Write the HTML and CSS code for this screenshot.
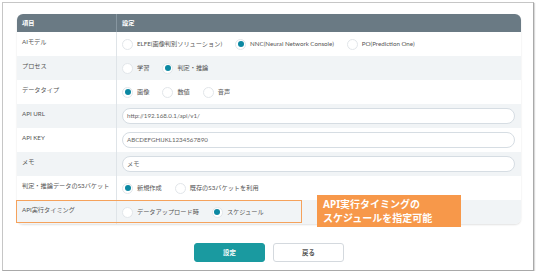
FILE: index.html
```html
<!DOCTYPE html>
<html lang="ja">
<head>
  <meta charset="UTF-8">
  <title>API設定</title>
  <link rel="stylesheet" href="styles.css">
</head>
<body>
  <div class="frame">
    <div class="sheet">
      <div class="table">
        <div class="row head">
          <div class="cell key">項目</div>
          <div class="cell val">設定</div>
        </div>

        <div class="row">
          <div class="cell key">AIモデル</div>
          <div class="cell val">
            <span class="opt"><i class="radio"></i>ELFE(画像判別ソリューション)</span>
            <span class="opt"><i class="radio on"></i>NNC(Neural Network Console)</span>
            <span class="opt"><i class="radio"></i>PO(Prediction One)</span>
          </div>
        </div>

        <div class="row alt">
          <div class="cell key">プロセス</div>
          <div class="cell val">
            <span class="opt"><i class="radio"></i>学習</span>
            <span class="opt"><i class="radio on"></i>判定・推論</span>
          </div>
        </div>

        <div class="row">
          <div class="cell key">データタイプ</div>
          <div class="cell val">
            <span class="opt"><i class="radio on"></i>画像</span>
            <span class="opt"><i class="radio"></i>数値</span>
            <span class="opt"><i class="radio"></i>音声</span>
          </div>
        </div>

        <div class="row alt">
          <div class="cell key">API URL</div>
          <div class="cell val"><div class="field">http://192.168.0.1/api/v1/</div></div>
        </div>

        <div class="row">
          <div class="cell key">API KEY</div>
          <div class="cell val"><div class="field">ABCDEFGHIJKL1234567890</div></div>
        </div>

        <div class="row alt">
          <div class="cell key">メモ</div>
          <div class="cell val"><div class="field">メモ</div></div>
        </div>

        <div class="row">
          <div class="cell key">判定・推論データのS3バケット</div>
          <div class="cell val">
            <span class="opt"><i class="radio on"></i>新規作成</span>
            <span class="opt"><i class="radio"></i>既存のS3バケットを利用</span>
          </div>
        </div>

        <div class="row alt last">
          <div class="cell key">API実行タイミング</div>
          <div class="cell val">
            <span class="opt"><i class="radio"></i>データアップロード時</span>
            <span class="opt"><i class="radio on"></i>スケジュール</span>
          </div>
        </div>

        <div class="mark"></div>
        <div class="callout">API実行タイミングの<br>スケジュールを指定可能</div>
      </div>

      <div class="actions">
        <button class="btn primary">設定</button>
        <button class="btn">戻る</button>
      </div>
    </div>
  </div>
</body>
</html>
```

FILE: styles.css
```css
body {
  margin: 0;
  background: #fff;
  font-family: Lato, "Noto Sans CJK JP", sans-serif;
  color: #555;
}

.frame {
  margin: 2px 0 0 2px;
  width: 532px;
  height: 269px;
  border: 1px solid #c6c6c6;
  border-right-color: #a9a9a9;
  border-bottom-color: #a9a9a9;
  box-sizing: border-box;
  box-shadow: 1px 1px 1px rgba(0,0,0,0.15);
}

.sheet {
  height: 100%;
  border-radius: 0 5px 5px 0;
  padding: 11px 11px 0 14px;
  box-sizing: border-box;
}

.table {
  position: relative;
  width: 504px;
  border-radius: 6px;
  background: #fff;
  box-shadow: 0 1px 2px rgba(0,0,0,0.12);
}

.row {
  display: grid;
  grid-template-columns: 100px 1fr;
  height: 24px;
  font-size: 6.2px;
  line-height: 10px;
}

.row.alt {
  background: #f1f4f6;
}

.row.last {
  border-radius: 0 0 6px 6px;
}

.cell.key {
  padding: 5px 0 0 5px;
  border-right: 1px solid #dfe4e8;
}

.cell.val {
  display: flex;
  align-items: center;
  padding-left: 5px;
}

.row.head {
  height: 18px;
  background: #6a7a84;
  color: #fff;
  font-weight: bold;
  border-radius: 6px 6px 0 0;
}

.row.head .cell {
  display: flex;
  align-items: center;
  padding-top: 0;
  border-right-color: #8796a0;
}

.opt {
  display: flex;
  align-items: center;
  margin-right: 13px;
}

.radio {
  width: 11px;
  height: 11px;
  border: 1px solid #e2e6ea;
  border-radius: 50%;
  background: #fff;
  box-sizing: border-box;
  margin-right: 4px;
  position: relative;
}

.radio.on::after {
  content: "";
  position: absolute;
  left: 1.5px;
  top: 1.5px;
  width: 6px;
  height: 6px;
  border-radius: 50%;
  background: #0b88a2;
}

.field {
  width: 393px;
  height: 16px;
  box-sizing: border-box;
  border: 1px solid #d6dde3;
  border-radius: 8px;
  background: #fff;
  padding-left: 4px;
  line-height: 14px;
  color: #666;
}

.mark {
  position: absolute;
  left: -1px;
  top: 186px;
  width: 286px;
  height: 23px;
  border: 1.5px solid #f5a25c;
  box-sizing: border-box;
}

.callout {
  position: absolute;
  left: 300px;
  top: 181px;
  width: 144px;
  height: 32px;
  box-sizing: border-box;
  padding: 2px 0 0 6px;
  background: #f7984a;
  color: #fff;
  font-family: "Noto Sans", "Noto Sans CJK JP", sans-serif;
  font-weight: bold;
  font-size: 10px;
  line-height: 14px;
}

.actions {
  display: flex;
  justify-content: center;
  gap: 8px;
  margin-top: 19px;
  padding-right: 1px;
}

.btn {
  width: 71px;
  height: 19px;
  border: 1px solid #d4d9de;
  border-radius: 3px;
  background: #fff;
  font-family: inherit;
  font-size: 6.4px;
  font-weight: bold;
  color: #555;
  padding: 0;
}

.btn.primary {
  background: #1a9aa0;
  border-color: #1a9aa0;
  color: #fff;
}
```
